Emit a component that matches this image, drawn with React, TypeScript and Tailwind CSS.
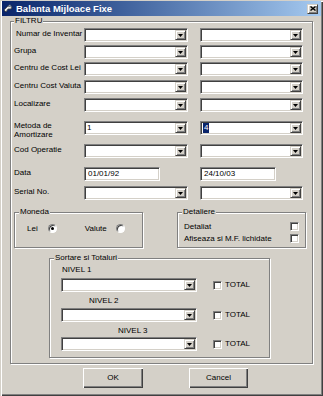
import type { ReactNode } from 'react'

const sunken =
  'border border-t-[#808080] border-l-[#808080] border-r-white border-b-white shadow-[inset_1px_1px_0_#404040,inset_-1px_-1px_0_#d4d0c8]'
const raised =
  'border border-t-[#d4d0c8] border-l-[#d4d0c8] border-r-[#404040] border-b-[#404040] shadow-[inset_1px_1px_0_#fff,inset_-1px_-1px_0_#808080]'

function DropButton() {
  return (
    <span className={`flex w-[11px] items-center justify-center bg-[#d4d0c8] ${raised}`}>
      <svg width="5" height="3" viewBox="0 0 5 3" aria-hidden>
        <polygon points="0,0 5,0 2.5,3" fill="#000" />
      </svg>
    </span>
  )
}

function Combo({ className, children }: { className: string; children?: ReactNode }) {
  return (
    <div className={`flex h-[14px] shrink-0 bg-white p-[1px] ${sunken} ${className}`}>
      <div className="flex flex-1 items-center overflow-hidden pl-[1px] text-[8px] leading-none">
        {children}
      </div>
      <DropButton />
    </div>
  )
}

function TextBox({ className, value }: { className: string; value: string }) {
  return (
    <div
      className={`flex h-[14px] shrink-0 items-center bg-white pl-[3px] text-[8px] leading-none ${sunken} ${className}`}
    >
      {value}
    </div>
  )
}

function CheckBox() {
  return <span className={`block h-[9px] w-[9px] shrink-0 bg-white ${sunken}`} />
}

function Radio({ checked }: { checked?: boolean }) {
  return (
    <span className="flex h-[9px] w-[9px] items-center justify-center rounded-full border border-t-[#808080] border-l-[#808080] border-r-white border-b-white bg-white shadow-[inset_1px_1px_0_#404040]">
      {checked ? <span className="h-[3px] w-[3px] rounded-full bg-black" /> : null}
    </span>
  )
}

function Group({
  label,
  className,
  labelClass,
  children,
}: {
  label: string
  className: string
  labelClass: string
  children: ReactNode
}) {
  return (
    <div
      className={`relative shrink-0 border border-[#808080] shadow-[inset_1px_1px_0_#fff,1px_1px_0_#fff] ${className}`}
    >
      <span
        className={`absolute top-[-6px] bg-[#d4d0c8] px-[1px] text-[8px] leading-[10px] ${labelClass}`}
      >
        {label}
      </span>
      {children}
    </div>
  )
}

function FilterRow({ label, mt, children }: { label: ReactNode; mt: string; children: ReactNode }) {
  return (
    <div className={`flex h-[14px] items-start ${mt}`}>
      <span className="w-[70px] shrink-0 pt-[1px] text-[8px] leading-[10px] whitespace-nowrap">
        {label}
      </span>
      {children}
    </div>
  )
}

export default function App() {
  return (
    <div className="relative flex h-[396px] w-[323px] flex-col bg-[#d4d0c8] font-['Liberation_Sans',Arial,sans-serif] text-black shadow-[inset_1px_1px_0_#d4d0c8,inset_2px_2px_0_#fff,inset_-1px_-1px_0_#404040,inset_-2px_-2px_0_#808080]">
      {/* title bar */}
      <div className="mx-[2px] mt-[1px] flex h-[15px] items-center bg-linear-to-r from-[#0a246a] to-[#a6caf0]">
        <svg className="ml-[1px]" width="10" height="10" viewBox="0 0 10 10" aria-hidden>
          <path d="M1 6 L5 2 L9 3 L8 5 L5 5 L3 8 Z" fill="#e8e8e8" stroke="#404040" strokeWidth="0.8" />
          <path d="M5 2 L7 0.5 L9 3" fill="#9db4d8" stroke="#404040" strokeWidth="0.6" />
        </svg>
        <span className="ml-[3px] text-[9.5px] font-bold leading-none text-white">
          Balanta Mijloace Fixe
        </span>
        <span
          className={`mr-[3px] ml-auto flex h-[10px] w-[11px] items-center justify-center bg-[#d4d0c8] ${raised}`}
        >
          <svg width="6" height="5" viewBox="0 0 6 5" aria-hidden>
            <path d="M0.5 0.5 L5.5 4.5 M5.5 0.5 L0.5 4.5" stroke="#000" strokeWidth="1.4" />
          </svg>
        </span>
      </div>

      {/* FILTRU */}
      <Group label="FILTRU" className="mt-[5px] ml-[10px] h-[343px] w-[303px]" labelClass="left-[3px]">
        <div className="flex flex-col pl-[3px]">
          <FilterRow label={<span className="pl-[2px]">Numar de Inventar</span>} mt="mt-[6px]">
            <Combo className="w-[104px]" />
            <Combo className="ml-[12px] w-[103px]" />
          </FilterRow>
          <FilterRow label="Grupa" mt="mt-[3px]">
            <Combo className="w-[104px]" />
            <Combo className="ml-[12px] w-[103px]" />
          </FilterRow>
          <FilterRow label="Centru de Cost Lei" mt="mt-[3px]">
            <Combo className="w-[104px]" />
            <Combo className="ml-[12px] w-[103px]" />
          </FilterRow>
          <FilterRow label="Centru Cost Valuta" mt="mt-[4px]">
            <Combo className="w-[104px]" />
            <Combo className="ml-[12px] w-[103px]" />
          </FilterRow>
          <FilterRow label="Localizare" mt="mt-[4px]">
            <Combo className="w-[104px]" />
            <Combo className="ml-[12px] w-[103px]" />
          </FilterRow>
          <div className="mt-[9px] flex h-[14px] items-start">
            <span className="w-[70px] shrink-0 text-[8px] leading-[9px]">
              Metoda de
              <br />
              Amortizare
            </span>
            <Combo className="w-[104px]">1</Combo>
            <Combo className="ml-[12px] w-[103px]">
              <span className="flex h-full items-center bg-[#0a246a] px-[1px] text-white">4</span>
            </Combo>
          </div>
          <FilterRow label="Cod Operatie" mt="mt-[9px]">
            <Combo className="w-[104px]" />
            <Combo className="ml-[12px] w-[103px]" />
          </FilterRow>
          <FilterRow label="Data" mt="mt-[9px]">
            <TextBox className="w-[76px]" value="01/01/92" />
            <TextBox className="ml-[40px] w-[76px]" value="24/10/03" />
          </FilterRow>
          <FilterRow label="Serial No." mt="mt-[5px]">
            <Combo className="w-[104px]" />
            <Combo className="ml-[12px] w-[103px]" />
          </FilterRow>

          <div className="mt-[12px] flex">
            <Group label="Moneda" className="h-[36px] w-[129px]" labelClass="left-[4px]">
              <div className="mt-[11px] flex h-[9px] items-center text-[8px] leading-none">
                <span className="ml-[12px]">Lei</span>
                <span className="ml-[10px]">
                  <Radio checked />
                </span>
                <span className="ml-[28px]">Valute</span>
                <span className="ml-[9px]">
                  <Radio />
                </span>
              </div>
            </Group>
            <Group label="Detaliere" className="ml-[34px] h-[36px] w-[129px]" labelClass="left-[4px]">
              <div className="flex flex-col pr-[6px] pl-[6px] text-[8px] leading-none">
                <div className="mt-[9px] flex h-[9px] items-center justify-between">
                  <span>Detaliat</span>
                  <CheckBox />
                </div>
                <div className="mt-[3px] flex h-[9px] items-center justify-between">
                  <span>Afiseaza si M.F. lichidate</span>
                  <CheckBox />
                </div>
              </div>
            </Group>
          </div>

          <Group
            label="Sortare si Totaluri"
            className="mt-[10px] ml-[35px] h-[100px] w-[221px]"
            labelClass="left-[4px]"
          >
            <div className="flex flex-col text-[8px]">
              <span className="mt-[6px] ml-[12px] leading-[9px]">NIVEL 1</span>
              <div className="mt-[4px] flex items-center">
                <Combo className="ml-[11px] w-[136px]" />
                <span className="ml-[16px]">
                  <CheckBox />
                </span>
                <span className="ml-[3px] leading-none">TOTAL</span>
              </div>
              <span className="mt-[4px] ml-[39px] leading-[9px]">NIVEL 2</span>
              <div className="mt-[3px] flex items-center">
                <Combo className="ml-[11px] w-[136px]" />
                <span className="ml-[16px]">
                  <CheckBox />
                </span>
                <span className="ml-[3px] leading-none">TOTAL</span>
              </div>
              <span className="mt-[4px] ml-[68px] leading-[9px]">NIVEL 3</span>
              <div className="mt-[2px] flex items-center">
                <Combo className="ml-[11px] w-[136px]" />
                <span className="ml-[16px]">
                  <CheckBox />
                </span>
                <span className="ml-[3px] leading-none">TOTAL</span>
              </div>
            </div>
          </Group>
        </div>
      </Group>

      {/* buttons */}
      <div className="mt-[4px] ml-[83px] flex">
        <button
          type="button"
          className="flex h-[20px] w-[60px] items-center justify-center bg-[#d4d0c8] text-[8px] leading-none shadow-[inset_1px_1px_0_#fff,inset_-1px_-1px_0_#404040,inset_-2px_-2px_0_#808080]"
        >
          OK
        </button>
        <button
          type="button"
          className="ml-[46px] flex h-[20px] w-[59px] items-center justify-center bg-[#d4d0c8] text-[8px] leading-none shadow-[inset_1px_1px_0_#fff,inset_-1px_-1px_0_#404040,inset_-2px_-2px_0_#808080]"
        >
          Cancel
        </button>
      </div>
    </div>
  )
}
